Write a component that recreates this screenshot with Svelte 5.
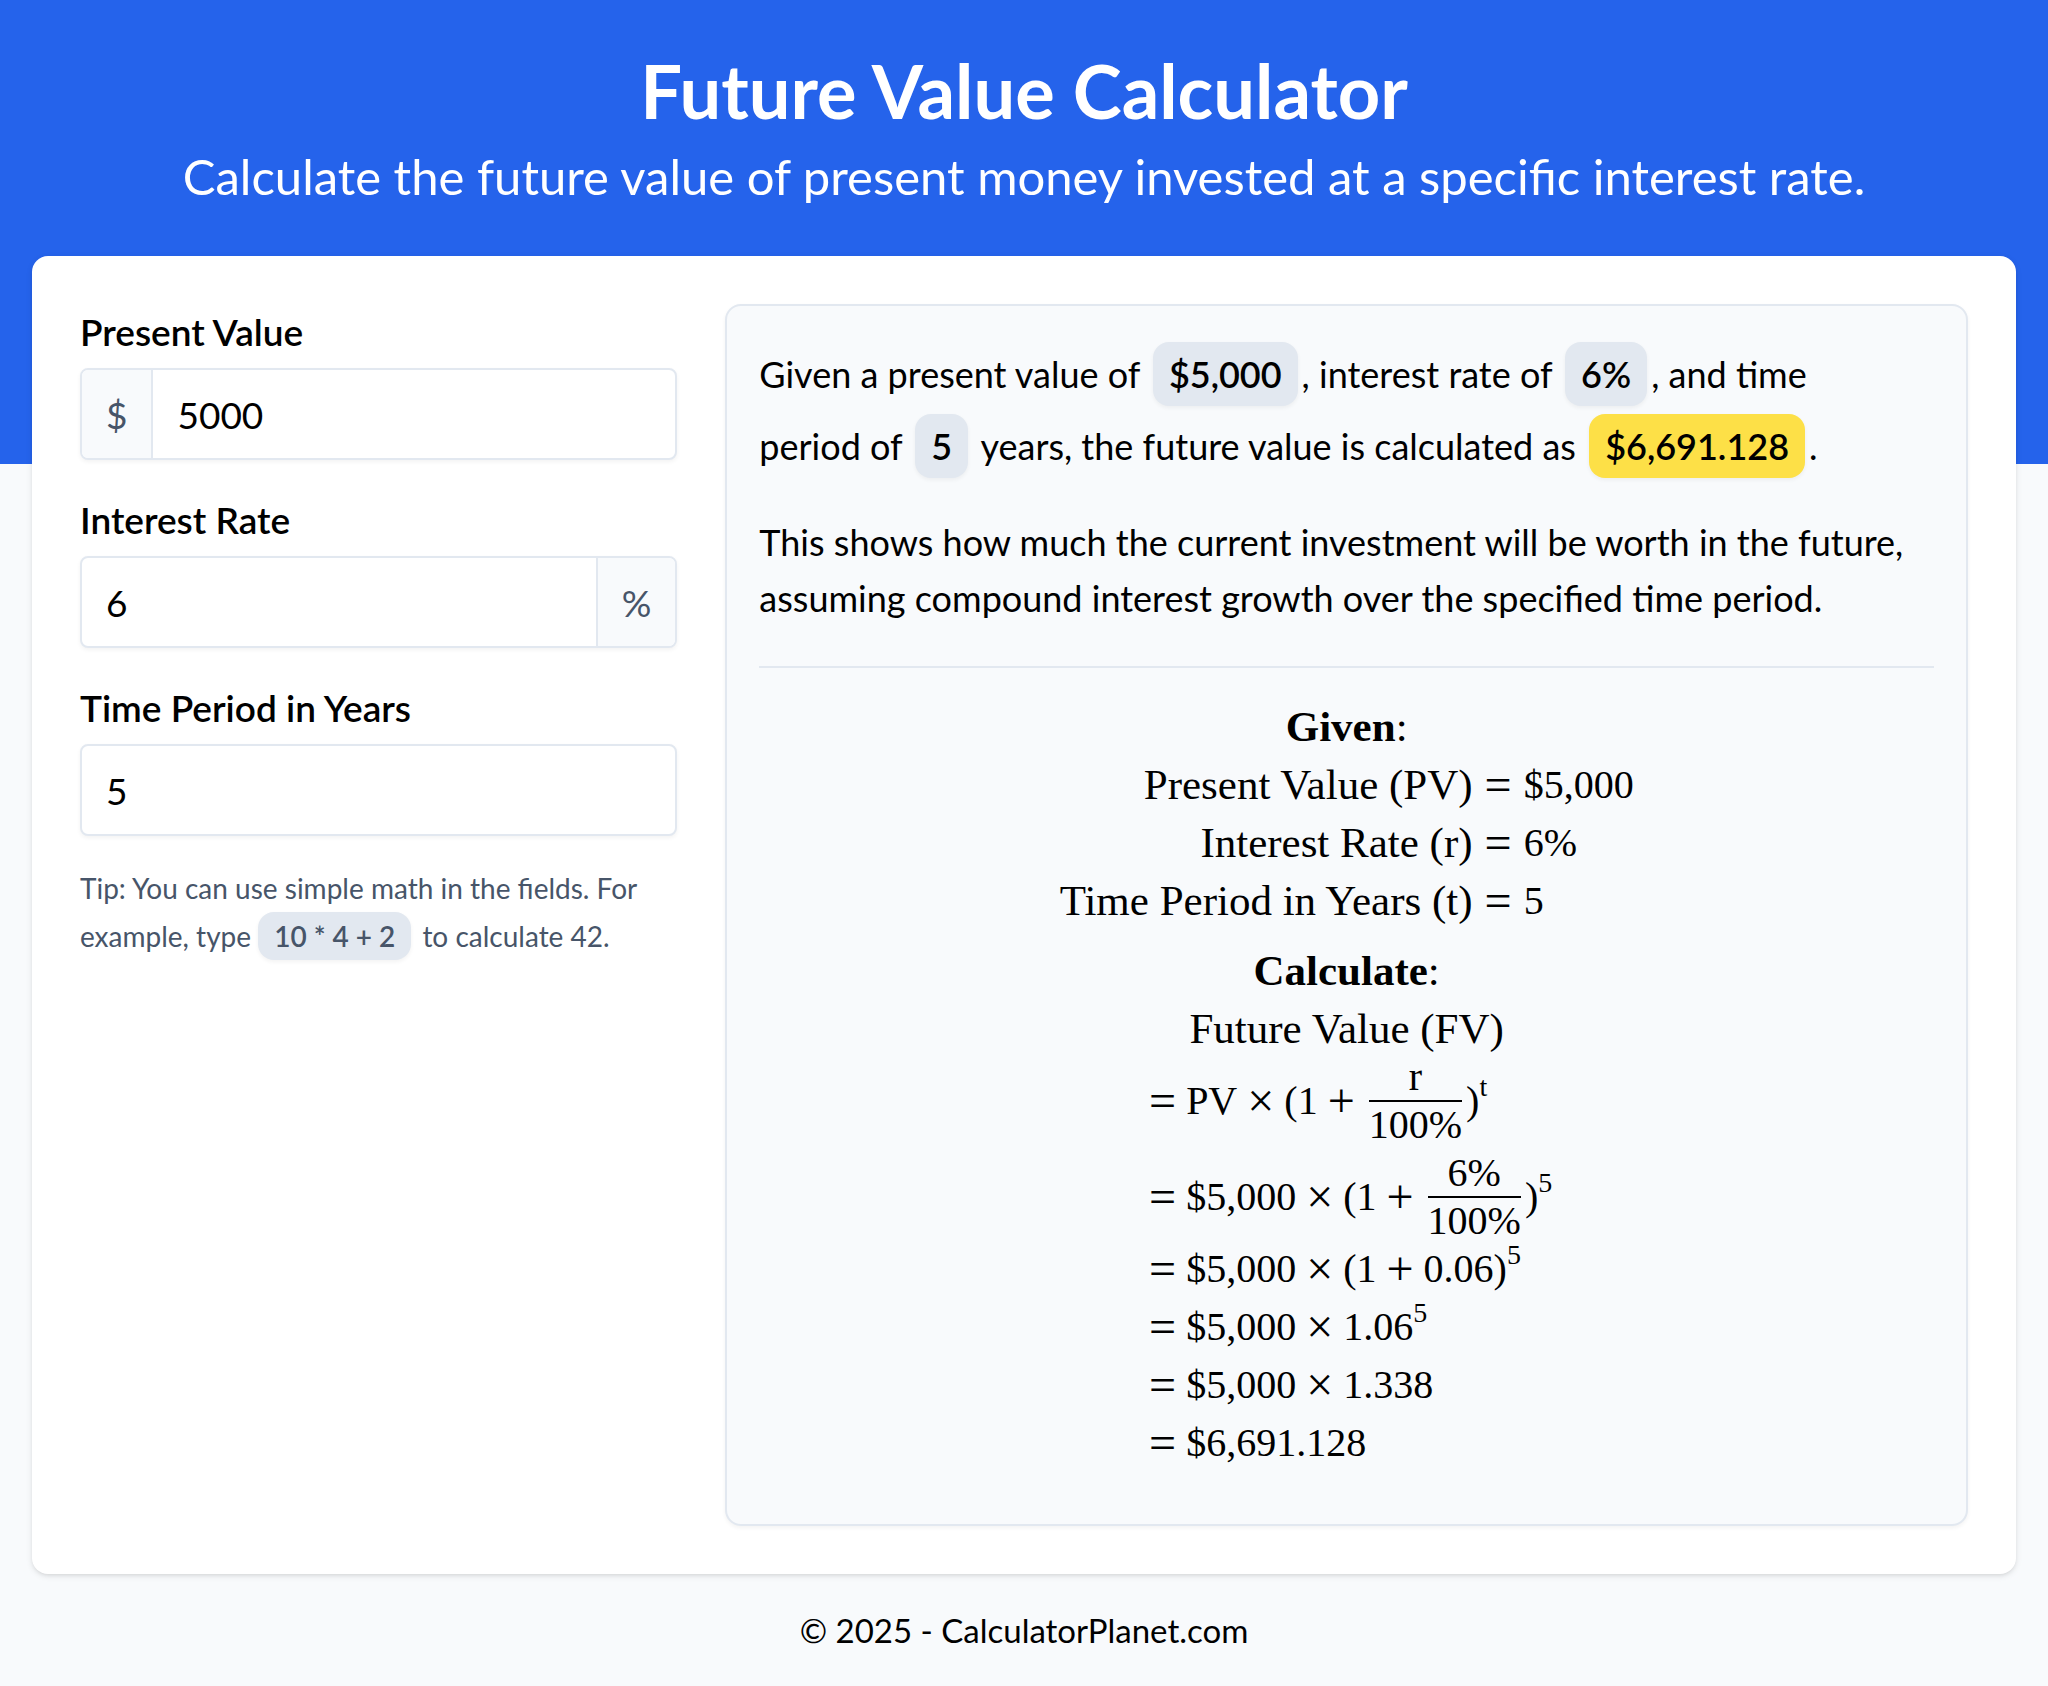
<script lang="ts">
  let presentValue = $state('5000');
  let interestRate = $state('6');
  let years = $state('5');

  // fields accept simple math such as 10*4+2
  function evaluate(text: string): number {
    if (!/^[\d\s.+\-*/()]+$/.test(text)) return 0;
    try {
      return Number(new Function(`return (${text})`)()) || 0;
    } catch {
      return 0;
    }
  }

  const fmt = (n: number) => n.toLocaleString('en-US', { maximumFractionDigits: 3 });

  const pv = $derived(evaluate(presentValue));
  const rate = $derived(evaluate(interestRate));
  const t = $derived(evaluate(years));
  const base = $derived(1 + rate / 100);
  const growth = $derived(Math.pow(base, t));
  const fv = $derived(pv * growth);
</script>

{#snippet frac(top: string, bottom: string)}
  <span class="frac"><span>{top}</span><span class="den">{bottom}</span></span>
{/snippet}

<header>
  <h1>Future Value Calculator</h1>
  <p>Calculate the future value of present money invested at a specific interest rate.</p>
</header>

<main>
  <form>
    <div class="field">
      <label for="pv">Present Value</label>
      <div class="control">
        <span class="unit before">$</span>
        <input id="pv" type="text" bind:value={presentValue} />
      </div>
    </div>
    <div class="field">
      <label for="rate">Interest Rate</label>
      <div class="control">
        <input id="rate" type="text" bind:value={interestRate} />
        <span class="unit after">%</span>
      </div>
    </div>
    <div class="field">
      <label for="years">Time Period in Years</label>
      <div class="control">
        <input id="years" type="text" bind:value={years} />
      </div>
    </div>
    <p class="tip">
      Tip: You can use simple math in the fields. For example, type <span class="chip">10 * 4 + 2</span> to calculate 42.
    </p>
  </form>

  <section class="result">
    <p class="summary">
      Given a present value of <span class="chip">${fmt(pv)}</span>, interest rate of
      <span class="chip">{fmt(rate)}%</span>, and time period of <span class="chip">{fmt(t)}</span> years, the
      future value is calculated as <span class="chip answer">${fmt(fv)}</span>.
    </p>
    <p class="note">
      This shows how much the current investment will be worth in the future, assuming compound interest growth
      over the specified time period.
    </p>
    <hr />
    <div class="math">
      <div class="head"><b>Given</b>:</div>
      <div class="given">
        <span class="name">Present Value (PV)</span><i>=</i><span>${fmt(pv)}</span>
        <span class="name">Interest Rate (r)</span><i>=</i><span>{fmt(rate)}%</span>
        <span class="name">Time Period in Years (t)</span><i>=</i><span>{fmt(t)}</span>
      </div>
      <div class="head calc"><b>Calculate</b>:</div>
      <div class="name">Future Value (FV)</div>
      <div class="steps">
        <div class="row tall">
          <i>=</i>PV<i>×</i>(1<i>+</i>{@render frac('r', '100%')})<sup>t</sup>
        </div>
        <div class="row tall">
          <i>=</i>${fmt(pv)}<i>×</i>(1<i>+</i>{@render frac(`${fmt(rate)}%`, '100%')})<sup>{fmt(t)}</sup>
        </div>
        <div class="row"><i>=</i>${fmt(pv)}<i>×</i>(1<i>+</i>{fmt(rate / 100)})<sup>{fmt(t)}</sup></div>
        <div class="row"><i>=</i>${fmt(pv)}<i>×</i>{fmt(base)}<sup>{fmt(t)}</sup></div>
        <div class="row"><i>=</i>${fmt(pv)}<i>×</i>{fmt(growth)}</div>
        <div class="row"><i>=</i>${fmt(fv)}</div>
      </div>
    </div>
  </section>
</main>

<footer>© 2025 - CalculatorPlanet.com</footer>

<style>
  :global(body) {
    margin: 0;
    background: #f8fafc;
    color: #000;
    font-family: Lato, 'Noto Sans', sans-serif;
    font-size: 36px;
  }
  :global(*) { box-sizing: border-box; }
  header {
    padding: 46px 32px 252px;
    background: #2563eb;
    color: #fff;
    text-align: center;
  }
  h1 {
    margin: 0;
    font-size: 74px;
    line-height: 90px;
    font-weight: 700;
  }
  header p {
    margin: 4px 0 0;
    font-size: 49px;
    line-height: 72px;
  }
  main {
    display: grid;
    grid-template-columns: minmax(0, 1fr) minmax(0, 1fr) minmax(0, 1fr);
    gap: 48px;
    margin: -208px 32px 0;
    padding: 48px;
    background: #fff;
    border-radius: 16px;
    box-shadow: 0 2px 6px rgb(0 0 0 / 0.1), 0 2px 4px -2px rgb(0 0 0 / 0.1);
  }
  .field + .field { margin-top: 32px; }
  label {
    display: block;
    margin-bottom: 8px;
    font-size: 37px;
    line-height: 56px;
    font-weight: 600;
  }
  .control {
    display: flex;
    height: 92px;
    border: 2px solid #e2e8f0;
    border-radius: 8px;
    overflow: hidden;
    background: #fff;
    font-size: 37px;
    box-shadow: 0 2px 4px rgb(0 0 0 / 0.05);
  }
  .unit {
    display: flex;
    align-items: center;
    padding: 0 24px;
    background: #f8fafc;
    color: #475569;
  }
  .before { border-right: 2px solid #e2e8f0; }
  .after { border-left: 2px solid #e2e8f0; }
  input {
    flex: 1;
    min-width: 0;
    padding: 0 24px;
    border: 0;
    outline: 0;
    background: transparent;
    color: inherit;
    font: inherit;
  }
  .tip {
    margin: 28px 0 0;
    color: #475569;
    font-size: 28px;
    line-height: 48px;
  }
  .chip {
    display: inline-block;
    margin: 0 4px;
    padding: 0 16px;
    border-radius: 16px;
    background: #e2e8f0;
    font-weight: 600;
    white-space: nowrap;
    box-shadow: 0 2px 4px rgb(0 0 0 / 0.05);
  }
  .tip .chip { margin-left: 0; }
  .summary .chip { line-height: 64px; }
  .summary .answer { background: #fde047; }
  .result {
    grid-column: span 2;
    padding: 32px;
    border: 2px solid #e2e8f0;
    border-radius: 16px;
    background: #f8fafc;
    box-shadow: 0 2px 4px rgb(0 0 0 / 0.05);
  }
  .summary {
    margin: 0;
    padding-right: 32px;
    line-height: 72px;
  }
  .note { margin: 32px 0 40px; line-height: 56px; }
  hr {
    margin: 0;
    border: 0;
    border-top: 2px solid #e2e8f0;
  }
  .math {
    display: flex;
    flex-direction: column;
    align-items: center;
    padding: 30px 0 20px;
    font-family: 'Liberation Serif', serif;
    font-size: 40px;
    line-height: 58px;
  }
  .math i {
    margin: 0 12px;
    font-size: 48px;
    font-style: normal;
  }
  .head, .name { font-size: 43px; }
  .calc { margin-top: 12px; }
  .given {
    display: grid;
    grid-template-columns: auto auto auto;
  }
  .name { text-align: right; }
  .steps { padding-left: 8px; }
  .row {
    display: flex;
    align-items: center;
    height: 58px;
    white-space: pre;
  }
  .tall { height: 86px; }
  .tall + .tall { margin-top: 10px; }
  .math .row i { margin: 0 10px; }
  .math .row i:first-child { margin-left: 0; }
  .frac {
    display: flex;
    flex-direction: column;
    margin: 0 4px;
    line-height: 46px;
    text-align: center;
  }
  .den { border-top: 2px solid #000; }
  sup {
    margin-bottom: 28px;
    font-size: 28px;
    line-height: 28px;
  }
  footer {
    padding: 32px;
    font-size: 33px;
    line-height: 48px;
    text-align: center;
  }
</style>
